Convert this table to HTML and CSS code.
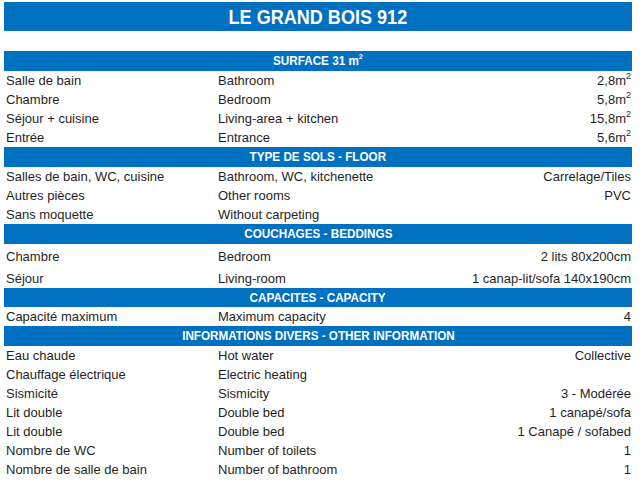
FILE: index.html
```html
<!DOCTYPE html>
<html lang="fr">
<head>
<meta charset="utf-8">
<title>LE GRAND BOIS 912</title>
<link rel="stylesheet" href="styles.css">
</head>
<body>
<div class="sheet">
  <div class="title"><span class="title-text">LE GRAND BOIS 912</span></div>

  <div class="bar"><span class="bar-text">SURFACE 31 m<sup>2</sup></span></div>
  <div class="row"><span class="fr">Salle de bain</span><span class="en">Bathroom</span><span class="val">2,8m<sup>2</sup></span></div>
  <div class="row"><span class="fr">Chambre</span><span class="en">Bedroom</span><span class="val">5,8m<sup>2</sup></span></div>
  <div class="row"><span class="fr">Séjour + cuisine</span><span class="en">Living-area + kitchen</span><span class="val">15,8m<sup>2</sup></span></div>
  <div class="row"><span class="fr">Entrée</span><span class="en">Entrance</span><span class="val">5,6m<sup>2</sup></span></div>

  <div class="bar"><span class="bar-text">TYPE DE SOLS - FLOOR</span></div>
  <div class="row"><span class="fr">Salles de bain, WC, cuisine</span><span class="en">Bathroom, WC, kitchenette</span><span class="val">Carrelage/Tiles</span></div>
  <div class="row"><span class="fr">Autres pièces</span><span class="en">Other rooms</span><span class="val">PVC</span></div>
  <div class="row"><span class="fr">Sans moquette</span><span class="en">Without carpeting</span><span class="val"></span></div>

  <div class="bar"><span class="bar-text">COUCHAGES - BEDDINGS</span></div>
  <div class="row tall"><span class="fr">Chambre</span><span class="en">Bedroom</span><span class="val">2 lits 80x200cm</span></div>
  <div class="row tall"><span class="fr">Séjour</span><span class="en">Living-room</span><span class="val">1 canap-lit/sofa 140x190cm</span></div>

  <div class="bar short"><span class="bar-text">CAPACITES - CAPACITY</span></div>
  <div class="row"><span class="fr">Capacité maximum</span><span class="en">Maximum capacity</span><span class="val">4</span></div>

  <div class="bar"><span class="bar-text">INFORMATIONS DIVERS - OTHER INFORMATION</span></div>
  <div class="row"><span class="fr">Eau chaude</span><span class="en">Hot water</span><span class="val">Collective</span></div>
  <div class="row"><span class="fr">Chauffage électrique</span><span class="en">Electric heating</span><span class="val"></span></div>
  <div class="row"><span class="fr">Sismicité</span><span class="en">Sismicity</span><span class="val">3 - Modérée</span></div>
  <div class="row"><span class="fr">Lit double</span><span class="en">Double bed</span><span class="val">1 canapé/sofa</span></div>
  <div class="row"><span class="fr">Lit double</span><span class="en">Double bed</span><span class="val">1 Canapé / sofabed</span></div>
  <div class="row"><span class="fr">Nombre de WC</span><span class="en">Number of toilets</span><span class="val">1</span></div>
  <div class="row"><span class="fr">Nombre de salle de bain</span><span class="en">Number of bathroom</span><span class="val">1</span></div>
</div>
</body>
</html>
```

FILE: styles.css
```css
html, body {
  margin: 0;
  padding: 0;
  background: #ffffff;
}

body {
  font-family: "Liberation Sans", Arial, sans-serif;
  font-size: 13px;
  color: #1f1f1f;
}

.sheet {
  width: 628px;
  padding: 2px 0 0 4px;
  display: flex;
  flex-direction: column;
}

.title {
  height: 29px;
  background: #0070c0;
  color: #ffffff;
  display: flex;
  align-items: center;
  justify-content: center;
  margin-bottom: 20px;
}

.title-text {
  display: inline-block;
  font-weight: bold;
  font-size: 21px;
  line-height: 29px;
  transform: scaleX(0.86);
  white-space: nowrap;
}

.bar {
  height: 20px;
  background: #0070c0;
  color: #ffffff;
  display: flex;
  align-items: center;
  justify-content: center;
}

.bar.short {
  height: 19px;
}

.bar-text {
  display: inline-block;
  font-weight: bold;
  font-size: 13px;
  transform: scaleX(0.9);
  white-space: nowrap;
  line-height: 20px;
}

.bar-text sup {
  font-size: 8px;
  line-height: 0;
  vertical-align: 6px;
}

.row {
  height: 19px;
  display: grid;
  grid-template-columns: 214px 1fr auto;
  align-items: center;
  line-height: 19px;
  box-sizing: border-box;
}

.row.tall {
  height: 22px;
  line-height: 19px;
  padding-top: 2px;
}

.fr {
  padding-left: 2px;
  white-space: nowrap;
}

.en {
  white-space: nowrap;
}

.val {
  text-align: right;
  padding-right: 1px;
  white-space: nowrap;
}

.val sup {
  font-size: 9px;
  line-height: 0;
  vertical-align: 6px;
}
```
